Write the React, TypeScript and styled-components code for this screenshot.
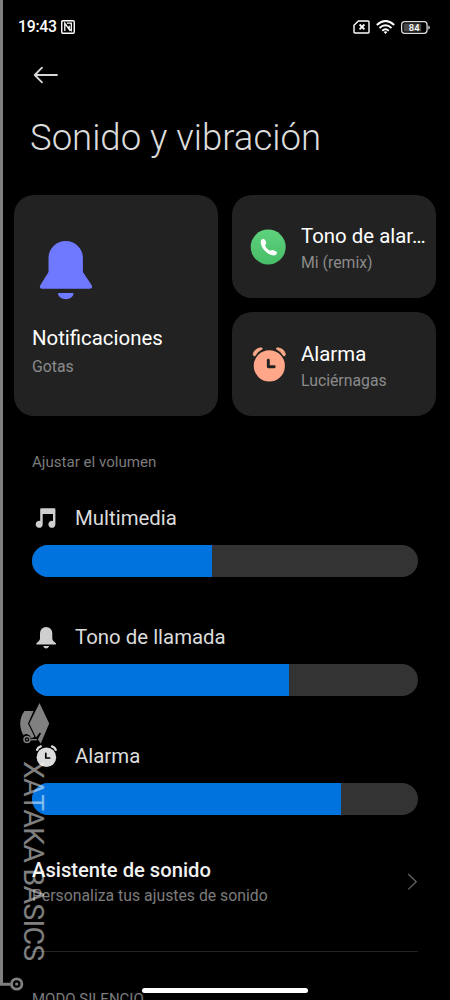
import React from 'react';
import styled, { createGlobalStyle } from 'styled-components';

const GlobalStyle = createGlobalStyle`
  * { box-sizing: border-box; }
  body { margin: 0; background: #000; }
`;

const Screen = styled.main`
  position: relative;
  width: 450px;
  height: 1000px;
  overflow: hidden;
  background: #000;
  color: #fff;
  font-family: Roboto, "Liberation Sans", sans-serif;
  display: flex;
  flex-direction: column;
`;

const StatusBar = styled.header`
  height: 54px;
  padding: 0 20px 0 18px;
  display: flex;
  align-items: center;
  justify-content: space-between;
  flex: none;
`;

const StatusGroup = styled.div<{ $gap: number }>`
  display: flex;
  align-items: center;
  gap: ${p => p.$gap}px;
  svg { display: block; }
`;

const Clock = styled.span`
  font-size: 15.8px;
  line-height: 20px;
  font-weight: 500;
  letter-spacing: -0.25px;
`;

const BackButton = styled.button`
  height: 42px;
  width: 60px;
  margin-left: 33px;
  padding: 0;
  border: 0;
  background: none;
  display: flex;
  align-items: center;
  flex: none;
`;

const Title = styled.h1`
  margin: 17px 0 0 30px;
  height: 50px;
  font-size: 36.5px;
  line-height: 50px;
  font-weight: 300;
  color: #dcdcdc;
  white-space: nowrap;
  flex: none;
`;

const Cards = styled.section`
  margin: 32px 14px 0;
  height: 221px;
  display: grid;
  grid-template-columns: 204px 204px;
  grid-template-rows: 103px 104px;
  gap: 14px;
  flex: none;
`;

const BigCard = styled.article`
  grid-row: 1 / 3;
  border-radius: 20px;
  background: #222;
  padding: 43px 18px 0;
  svg { display: block; margin-left: 6px; }
`;

const SmallCard = styled.article`
  border-radius: 20px;
  background: #222;
  display: flex;
  align-items: center;
  padding: 2px 9px 0 17px;
  gap: 14px;
  svg { flex: none; }
`;

const CardText = styled.div`
  min-width: 0;
  padding-top: 2px;
`;

const CardTitle = styled.h2<{ $top?: number }>`
  margin: ${p => p.$top ?? 0}px 0 0;
  font-size: 20.4px;
  line-height: 28px;
  font-weight: 400;
  white-space: nowrap;
  overflow: hidden;
  text-overflow: ellipsis;
`;

const CardSub = styled.p<{ $top?: number }>`
  margin: ${p => p.$top ?? 1}px 0 0;
  font-size: 15.8px;
  line-height: 24px;
  color: #8b8b8b;
`;

const SectionLabel = styled.h3`
  margin: 35px 0 0 32px;
  font-size: 15.1px;
  line-height: 22px;
  font-weight: 400;
  color: #7c7c7c;
  flex: none;
`;

const Sliders = styled.section`
  margin: 30px 32px 0;
  display: flex;
  flex-direction: column;
  gap: 43px;
  flex: none;
`;

const SliderRow = styled.div`
  height: 76px;
`;

const SliderHead = styled.div`
  height: 32px;
  display: flex;
  align-items: center;
  gap: 15px;
  font-size: 20.4px;
  line-height: 30px;
  color: #dcdcdc;
  margin-bottom: 10px;
  svg { flex: none; }
`;

const SliderLabel = styled.span`
  padding-bottom: 2px;
`;

const Track = styled.div`
  height: 32px;
  border-radius: 16px;
  background: #333;
  overflow: hidden;
`;

const Fill = styled.div`
  height: 100%;
  background: #0073df;
`;

const LinkRow = styled.section`
  margin: 41px 32px 0;
  height: 48px;
  display: flex;
  align-items: center;
  justify-content: space-between;
  flex: none;
`;

const LinkTitle = styled.h2`
  margin: 0;
  font-size: 20.2px;
  line-height: 27px;
  font-weight: 500;
  color: #f2f2f2;
`;

const LinkSub = styled.p`
  margin: 0;
  font-size: 15.8px;
  line-height: 23px;
  color: #7c7c7c;
`;

const Divider = styled.hr`
  width: 386px;
  height: 1px;
  margin: 45px 32px 0;
  border: 0;
  background: #242424;
  flex: none;
`;

const NextLabel = styled.h3`
  margin: 37px 0 0 32px;
  font-size: 15px;
  line-height: 20px;
  font-weight: 400;
  color: #7c7c7c;
  flex: none;
`;

const HomeBar = styled.div`
  position: absolute;
  left: 142px;
  top: 988px;
  width: 166px;
  height: 5px;
  border-radius: 3px;
  background: #fff;
`;

const Watermark = styled.div`
  position: absolute;
  inset: 0;
  opacity: 0.5;
  pointer-events: none;
  svg { position: absolute; left: 0; top: 0; }
`;

const WatermarkText = styled.span`
  position: absolute;
  left: 48px;
  top: 761px;
  font-size: 28.5px;
  font-weight: 400;
  line-height: 30px;
  letter-spacing: -0.75px;
  white-space: nowrap;
  transform-origin: 0 0;
  transform: rotate(90deg);
`;

const NfcIcon = () => (
  <svg width="14" height="14" viewBox="0 0 14 14" fill="none" stroke="#fff">
    <rect x=".75" y=".75" width="12.5" height="12.5" rx="1.2" strokeWidth="1.4" />
    <path d="M3.8 11V3.2L8.2 9.4V5.8M5.8 3.2H10.3V10.6L8.2 9.2" strokeWidth="1.3" />
  </svg>
);

const SimIcon = () => (
  <svg width="17" height="14" viewBox="0 0 17 14" fill="none" stroke="#fff">
    <path d="M5.4 1H15Q16 1 16 2V12Q16 13 15 13H2Q1 13 1 12V5.3Z" strokeWidth="1.4" strokeLinejoin="round" />
    <path d="M6.6 4.5 11.4 9.3M11.4 4.5 6.6 9.3" strokeWidth="1.8" />
  </svg>
);

const WifiIcon = () => (
  <svg width="19" height="14" viewBox="0 0 19 14" fill="none" stroke="#fff" strokeWidth="1.9">
    <path d="M.8 5Q9.5-2.8 18.2 5M3.5 8Q9.5 2.5 15.5 8M6.2 10.7Q9.5 7.8 12.8 10.7" />
    <path d="M7.6 12Q9.5 10.4 11.4 12L9.5 14Z" fill="#fff" stroke="none" />
  </svg>
);

const BatteryIcon = () => (
  <svg width="29" height="13" viewBox="0 0 29 13">
    <rect x=".65" y=".65" width="25.4" height="11.7" rx="3" fill="none" stroke="#ddd" strokeWidth="1.3" />
    <rect x="2.6" y="2.5" width="17.5" height="8" rx="1" fill="#484848" />
    <path d="M27.3 4.4Q28.8 4.6 28.8 6.5T27.3 8.6Z" fill="#ddd" />
    <text x="13.2" y="9.8" textAnchor="middle" fontFamily="Roboto, sans-serif" fontSize="9.4" fontWeight="500" fill="#fff">84</text>
  </svg>
);

const BackIcon = () => (
  <svg width="26" height="18" viewBox="0 0 26 18" fill="none" stroke="#d8d8d8" strokeWidth="1.8" strokeLinecap="round" strokeLinejoin="round">
    <path d="M9 1.6 1.7 9 9 16.3M1.7 9H24" />
  </svg>
);

const BigBellIcon = () => (
  <svg width="56" height="66" viewBox="0 0 56 66" fill="#6f79ff">
    <path d="M10.5 20.2A17.2 17.2 0 0 1 44.9 20.2V34L53.7 47.2Q55.2 50.8 51.8 50.8H4.2Q.8 50.8 2.3 47.2L10.5 34Z" />
    <path d="M20 55H35.5C35.5 63.2 20 63.2 20 55Z" />
  </svg>
);

const PhoneIcon = () => (
  <svg width="38" height="38" viewBox="0 0 38 38">
    <defs>
      <linearGradient id="callGreen" x1="0" y1="0" x2="0" y2="1">
        <stop offset="0" stopColor="#5ed27d" />
        <stop offset="1" stopColor="#48bd68" />
      </linearGradient>
    </defs>
    <circle cx="19.2" cy="18" r="17.5" fill="url(#callGreen)" />
    <path d="M12.1 11.2C13 9.7 15.2 9.5 16.1 11L17.1 13.2C17.8 15.4 15.9 15.5 16.3 16.7C17.1 18.7 18.8 20.5 20.8 21.6C22 22.2 22.6 20.6 24.3 21.2L27.2 22.5C28.5 23.4 27.7 25.2 26.7 26C23.5 27.4 18.7 24.8 15.6 21.5C12.7 18.4 10.9 13.9 12.1 11.2Z" fill="#fff" />
  </svg>
);

const AlarmIcon = () => (
  <svg width="38" height="38" viewBox="0 0 38 38">
    <path d="M4.2 8.4Q5 3 11.7 1.8Q13.2 1.7 13.3 3Q8.4 5.3 6.2 9.7Q4.4 10.4 4.2 8.4ZM36.4 8.4Q35.6 3 28.9 1.8Q27.4 1.7 27.3 3Q32.2 5.3 34.4 9.7Q36.2 10.4 36.4 8.4Z" fill="#fca987" stroke="#fca987" strokeWidth=".8" strokeLinejoin="round" />
    <circle cx="20.3" cy="19.9" r="15.6" fill="#ffa788" />
    <path d="M19.3 14.3V20.8H25.2" fill="none" stroke="#222" strokeWidth="2.9" strokeLinecap="round" strokeLinejoin="round" />
  </svg>
);

const MusicIcon = () => (
  <svg width="28" height="28" viewBox="0 0 28 28" fill="#cfcfcf">
    <path d="M8.2 4.4Q8.2 3.3 9.3 3.3H22.2Q23.4 3.3 23.4 4.4V19.3A3.5 3.5 0 1 1 21 16V9H10.7V19.3A3.5 3.5 0 1 1 8.2 16Z" />
  </svg>
);

const BellIcon = () => (
  <svg width="28" height="28" viewBox="0 0 28 28" fill="#cfcfcf">
    <path d="M8 9.2A6.1 6.1 0 0 1 20.3 9.2V14.9Q20.9 17.4 23.9 19.3Q24.6 20.6 23.4 20.6H5Q3.8 20.6 4.4 19.3Q7.4 17.4 8 14.9ZM11.3 22H17C16.5 25.2 11.8 25.2 11.3 22Z" />
  </svg>
);

const ClockIcon = () => (
  <svg width="28" height="28" viewBox="0 0 28 28">
    <path d="M5 6.8Q6 4.2 8.8 3.4M23.8 6.8Q22.8 4.2 20 3.4" fill="none" stroke="#dcdcdc" strokeWidth="2.3" strokeLinecap="round" />
    <circle cx="14.4" cy="14.2" r="9.8" fill="#dcdcdc" />
    <path d="M13.8 10.4V15H17.6" fill="none" stroke="#000" strokeWidth="1.7" strokeLinecap="round" strokeLinejoin="round" />
  </svg>
);

const ChevronIcon = () => (
  <svg width="12" height="18" viewBox="0 0 12 18" fill="none" stroke="#646464" strokeWidth="1.3">
    <path d="M2.3 1 10.2 8.7 2.3 16.4" />
  </svg>
);

const volumes = [
  { label: 'Multimedia', icon: <MusicIcon />, level: 46.7 },
  { label: 'Tono de llamada', icon: <BellIcon />, level: 66.7 },
  { label: 'Alarma', icon: <ClockIcon />, level: 80 },
];

export default function App() {
  return (
    <>
      <GlobalStyle />
      <Screen>
        <StatusBar>
          <StatusGroup $gap={4}>
            <Clock>19:43</Clock>
            <NfcIcon />
          </StatusGroup>
          <StatusGroup $gap={6}>
            <SimIcon />
            <WifiIcon />
            <BatteryIcon />
          </StatusGroup>
        </StatusBar>
        <BackButton aria-label="Atrás"><BackIcon /></BackButton>
        <Title>Sonido y vibración</Title>
        <Cards>
          <BigCard>
            <BigBellIcon />
            <CardTitle $top={20}>Notificaciones</CardTitle>
            <CardSub $top={3}>Gotas</CardSub>
          </BigCard>
          <SmallCard>
            <PhoneIcon />
            <CardText>
              <CardTitle>Tono de alar…</CardTitle>
              <CardSub>Mi (remix)</CardSub>
            </CardText>
          </SmallCard>
          <SmallCard>
            <AlarmIcon />
            <CardText>
              <CardTitle>Alarma</CardTitle>
              <CardSub>Luciérnagas</CardSub>
            </CardText>
          </SmallCard>
        </Cards>
        <SectionLabel>Ajustar el volumen</SectionLabel>
        <Sliders>
          {volumes.map(v => (
            <SliderRow key={v.label}>
              <SliderHead>{v.icon}<SliderLabel>{v.label}</SliderLabel></SliderHead>
              <Track><Fill style={{ width: `${v.level}%` }} /></Track>
            </SliderRow>
          ))}
        </Sliders>
        <LinkRow>
          <div>
            <LinkTitle>Asistente de sonido</LinkTitle>
            <LinkSub>Personaliza tus ajustes de sonido</LinkSub>
          </div>
          <ChevronIcon />
        </LinkRow>
        <Divider />
        <NextLabel>MODO SILENCIO</NextLabel>
        <HomeBar />
        <Watermark>
          <svg width="60" height="1000" viewBox="0 0 60 1000" fill="none" stroke="#fff">
            <path d="M1.5 0V984.3H10.5" strokeWidth="3" />
            <circle cx="16.7" cy="984" r="5.2" strokeWidth="2.8" />
            <circle cx="16.7" cy="984" r="1.6" fill="#fff" stroke="none" />
            <path d="M39.5 703 49.2 723.5 40.8 743.5 37.8 739.5 41 733.5 39.8 732.5 36 737.5 29.3 723.5Z" fill="#fff" stroke="none" />
            <path d="M24.5 711H33.5L28 723.5 34.3 736.5 32.5 738H31A4.6 4.6 0 0 0 23.5 735.2C19 728 19 718 24.5 711Z" fill="#fff" stroke="none" />
            <circle cx="27" cy="739.5" r="3" strokeWidth="1.5" />
            <circle cx="27" cy="739.5" r="1" fill="#fff" stroke="none" />
            <path d="M30.5 739.7H36.8" strokeWidth="1.4" />
          </svg>
          <WatermarkText>XATAKA BASICS</WatermarkText>
        </Watermark>
      </Screen>
    </>
  );
}
